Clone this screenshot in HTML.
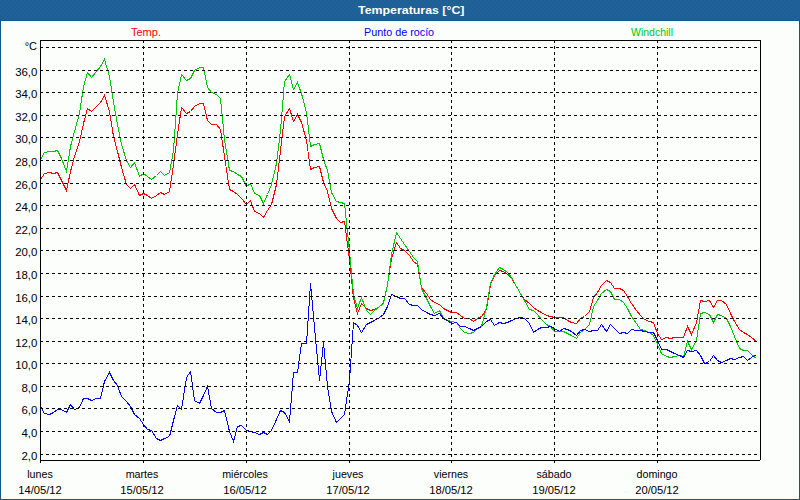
<!DOCTYPE html>
<html><head><meta charset="utf-8"><style>
html,body{margin:0;padding:0;}
body{width:800px;height:500px;position:relative;overflow:hidden;background:#fcfefc;font-family:"Liberation Sans",sans-serif;}
#frame{position:absolute;left:0;top:0;width:798px;height:498px;border:1px solid #13558d;}
#title{position:absolute;left:0;top:0;width:800px;height:20px;background:#1e6094;border-bottom:1px solid #13558d;}
#title span{position:absolute;left:358px;top:4px;transform-origin:left top;transform:scaleX(1.125);color:#fff;font:bold 11px "Liberation Sans",sans-serif;}
.t{position:absolute;font-size:11px;line-height:13px;white-space:nowrap;}
</style></head><body>
<div id="frame"></div>
<div id="title"><svg width="800" height="20" style="position:absolute;left:0;top:0" shape-rendering="crispEdges"><defs><pattern id="dp" width="4" height="4" patternUnits="userSpaceOnUse"><rect x="1" y="1" width="1" height="1" fill="#2864b4"/><rect x="3" y="3" width="1" height="1" fill="#2864b4"/></pattern></defs><rect x="1" y="0" width="798" height="20" fill="url(#dp)"/></svg><span>Temperaturas [°C]</span></div>
<svg width="800" height="500" style="position:absolute;left:0;top:0" shape-rendering="crispEdges"><polyline fill="none" stroke="#ff0000" stroke-width="1" points="40.5,179.5 44.5,173.5 49.5,172.5 53.5,173.5 57.5,172.5 61.5,180.5 66.5,190.5 70.5,171.5 74.5,156.5 79.5,141.5 83.5,123.5 87.5,108.5 91.5,111.5 96.5,106.5 100.5,102.5 104.5,95.5 109.5,111.5 113.5,136.5 117.5,151.5 121.5,167.5 126.5,184.5 130.5,188.5 134.5,184.5 139.5,195.5 143.5,193.5 147.5,195.5 151.5,198.5 156.5,195.5 160.5,192.5 164.5,194.5 169.5,191.5 173.5,164.5 177.5,134.5 181.5,107.5 186.5,113.5 190.5,111.5 194.5,106.5 199.5,103.5 203.5,103.5 207.5,120.5 211.5,124.5 216.5,124.5 220.5,129.5 224.5,156.5 229.5,189.5 233.5,191.5 237.5,194.5 241.5,198.5 246.5,204.5 250.5,200.5 254.5,211.5 259.5,213.5 263.5,217.5 267.5,210.5 271.5,204.5 276.5,184.5 280.5,150.5 284.5,116.5 289.5,108.5 293.5,121.5 297.5,114.5 301.5,122.5 306.5,140.5 310.5,169.5 314.5,167.5 319.5,166.5 323.5,182.5 327.5,191.5 331.5,208.5 336.5,218.5 340.5,222.5 344.5,221.5 349.5,259.5 353.5,298.5 357.5,313.5 361.5,303.5 366.5,308.5 370.5,310.5 374.5,309.5 379.5,306.5 383.5,302.5 387.5,284.5 391.5,258.5 396.5,242.5 400.5,248.5 404.5,250.5 409.5,255.5 413.5,261.5 417.5,264.5 421.5,287.5 426.5,293.5 430.5,299.5 434.5,302.5 439.5,304.5 443.5,308.5 447.5,310.5 451.5,312.5 456.5,312.5 460.5,315.5 464.5,318.5 469.5,318.5 473.5,321.5 477.5,318.5 481.5,316.5 486.5,309.5 490.5,284.5 494.5,275.5 499.5,270.5 503.5,271.5 507.5,274.5 511.5,278.5 516.5,286.5 520.5,293.5 524.5,299.5 529.5,303.5 533.5,307.5 537.5,310.5 541.5,312.5 546.5,315.5 550.5,316.5 554.5,317.5 559.5,317.5 563.5,317.5 567.5,320.5 571.5,322.5 576.5,323.5 580.5,318.5 584.5,316.5 589.5,311.5 593.5,297.5 597.5,292.5 601.5,285.5 606.5,280.5 610.5,282.5 614.5,288.5 619.5,288.5 623.5,290.5 627.5,296.5 631.5,303.5 636.5,310.5 640.5,315.5 644.5,319.5 649.5,321.5 653.5,322.5 657.5,333.5 661.5,339.5 666.5,337.5 670.5,338.5 674.5,337.5 679.5,337.5 683.5,337.5 687.5,326.5 691.5,334.5 696.5,322.5 700.5,300.5 704.5,301.5 709.5,300.5 713.5,307.5 717.5,300.5 721.5,300.5 726.5,304.5 730.5,313.5 734.5,321.5 739.5,329.5 743.5,332.5 747.5,334.5 751.5,337.5 756.5,341.5"/><polyline fill="none" stroke="#00c800" stroke-width="1" points="40.5,159.5 44.5,152.5 49.5,151.5 53.5,151.5 57.5,150.5 61.5,158.5 66.5,171.5 70.5,146.5 74.5,131.5 79.5,113.5 83.5,86.5 87.5,72.5 91.5,77.5 96.5,71.5 100.5,66.5 104.5,59.5 109.5,76.5 113.5,102.5 117.5,124.5 121.5,144.5 126.5,160.5 130.5,167.5 134.5,162.5 139.5,176.5 143.5,173.5 147.5,176.5 151.5,179.5 156.5,175.5 160.5,171.5 164.5,175.5 169.5,172.5 173.5,150.5 177.5,93.5 181.5,74.5 186.5,80.5 190.5,78.5 194.5,70.5 199.5,67.5 203.5,67.5 207.5,87.5 211.5,92.5 216.5,94.5 220.5,98.5 224.5,139.5 229.5,170.5 233.5,171.5 237.5,174.5 241.5,176.5 246.5,186.5 250.5,183.5 254.5,193.5 259.5,195.5 263.5,203.5 267.5,194.5 271.5,184.5 276.5,163.5 280.5,130.5 284.5,81.5 289.5,74.5 293.5,89.5 297.5,82.5 301.5,93.5 306.5,112.5 310.5,146.5 314.5,144.5 319.5,143.5 323.5,159.5 327.5,170.5 331.5,192.5 336.5,201.5 340.5,202.5 344.5,203.5 349.5,251.5 353.5,294.5 357.5,308.5 361.5,297.5 366.5,310.5 370.5,314.5 374.5,310.5 379.5,306.5 383.5,303.5 387.5,284.5 391.5,254.5 396.5,232.5 400.5,238.5 404.5,244.5 409.5,251.5 413.5,257.5 417.5,261.5 421.5,288.5 426.5,298.5 430.5,306.5 434.5,313.5 439.5,310.5 443.5,318.5 447.5,320.5 451.5,321.5 456.5,322.5 460.5,328.5 464.5,332.5 469.5,333.5 473.5,332.5 477.5,328.5 481.5,326.5 486.5,307.5 490.5,283.5 494.5,274.5 499.5,267.5 503.5,269.5 507.5,272.5 511.5,277.5 516.5,286.5 520.5,293.5 524.5,300.5 529.5,309.5 533.5,310.5 537.5,314.5 541.5,319.5 546.5,324.5 550.5,326.5 554.5,331.5 559.5,331.5 563.5,331.5 567.5,333.5 571.5,335.5 576.5,338.5 580.5,332.5 584.5,329.5 589.5,324.5 593.5,306.5 597.5,300.5 601.5,293.5 606.5,289.5 610.5,291.5 614.5,299.5 619.5,299.5 623.5,302.5 627.5,308.5 631.5,316.5 636.5,323.5 640.5,329.5 644.5,330.5 649.5,332.5 653.5,335.5 657.5,344.5 661.5,353.5 666.5,356.5 670.5,357.5 674.5,356.5 679.5,355.5 683.5,356.5 687.5,341.5 691.5,349.5 696.5,340.5 700.5,313.5 704.5,312.5 709.5,314.5 713.5,322.5 717.5,314.5 721.5,315.5 726.5,318.5 730.5,326.5 734.5,336.5 739.5,348.5 743.5,350.5 747.5,350.5 751.5,354.5 756.5,358.5"/><polyline fill="none" stroke="#0000ff" stroke-width="1" points="40.5,406.5 44.5,413.5 49.5,414.5 53.5,412.5 57.5,409.5 61.5,409.5 66.5,412.5 70.5,404.5 74.5,409.5 79.5,407.5 83.5,398.5 87.5,398.5 91.5,400.5 96.5,398.5 100.5,398.5 104.5,381.5 109.5,372.5 113.5,380.5 117.5,385.5 121.5,396.5 126.5,401.5 130.5,406.5 134.5,414.5 139.5,418.5 143.5,424.5 147.5,429.5 151.5,430.5 156.5,438.5 160.5,440.5 164.5,438.5 169.5,436.5 173.5,420.5 177.5,405.5 181.5,409.5 186.5,377.5 190.5,371.5 194.5,400.5 199.5,403.5 203.5,395.5 207.5,386.5 211.5,408.5 216.5,412.5 220.5,412.5 224.5,410.5 229.5,431.5 233.5,441.5 237.5,426.5 241.5,425.5 246.5,430.5 250.5,431.5 254.5,432.5 259.5,434.5 263.5,432.5 267.5,434.5 271.5,430.5 276.5,419.5 280.5,410.5 284.5,412.5 289.5,421.5 293.5,372.5 297.5,372.5 301.5,343.5 306.5,343.5 310.5,283.5 314.5,327.5 319.5,380.5 323.5,342.5 327.5,386.5 331.5,411.5 336.5,422.5 340.5,418.5 344.5,414.5 349.5,380.5 353.5,322.5 357.5,325.5 361.5,332.5 366.5,324.5 370.5,322.5 374.5,320.5 379.5,317.5 383.5,314.5 387.5,306.5 391.5,294.5 396.5,296.5 400.5,298.5 404.5,298.5 409.5,304.5 413.5,305.5 417.5,305.5 421.5,309.5 426.5,312.5 430.5,314.5 434.5,315.5 439.5,313.5 443.5,318.5 447.5,320.5 451.5,323.5 456.5,322.5 460.5,326.5 464.5,326.5 469.5,328.5 473.5,330.5 477.5,328.5 481.5,326.5 486.5,321.5 490.5,319.5 494.5,325.5 499.5,322.5 503.5,323.5 507.5,322.5 511.5,320.5 516.5,318.5 520.5,317.5 524.5,318.5 529.5,323.5 533.5,332.5 537.5,329.5 541.5,327.5 546.5,327.5 550.5,326.5 554.5,328.5 559.5,331.5 563.5,328.5 567.5,329.5 571.5,331.5 576.5,335.5 580.5,330.5 584.5,329.5 589.5,331.5 593.5,330.5 597.5,330.5 601.5,324.5 606.5,331.5 610.5,324.5 614.5,328.5 619.5,333.5 623.5,332.5 627.5,333.5 631.5,329.5 636.5,330.5 640.5,330.5 644.5,331.5 649.5,332.5 653.5,332.5 657.5,340.5 661.5,349.5 666.5,349.5 670.5,351.5 674.5,353.5 679.5,355.5 683.5,357.5 687.5,350.5 691.5,351.5 696.5,350.5 700.5,355.5 704.5,363.5 709.5,361.5 713.5,355.5 717.5,360.5 721.5,362.5 726.5,360.5 730.5,358.5 734.5,359.5 739.5,357.5 743.5,356.5 747.5,360.5 751.5,357.5 756.5,354.5"/><line x1="40" y1="47.5" x2="760" y2="47.5" stroke="#000" stroke-dasharray="3 3"/><line x1="40" y1="70.5" x2="760" y2="70.5" stroke="#000" stroke-dasharray="3 3"/><line x1="40" y1="92.5" x2="760" y2="92.5" stroke="#000" stroke-dasharray="3 3"/><line x1="40" y1="115.5" x2="760" y2="115.5" stroke="#000" stroke-dasharray="3 3"/><line x1="40" y1="137.5" x2="760" y2="137.5" stroke="#000" stroke-dasharray="3 3"/><line x1="40" y1="160.5" x2="760" y2="160.5" stroke="#000" stroke-dasharray="3 3"/><line x1="40" y1="183.5" x2="760" y2="183.5" stroke="#000" stroke-dasharray="3 3"/><line x1="40" y1="205.5" x2="760" y2="205.5" stroke="#000" stroke-dasharray="3 3"/><line x1="40" y1="228.5" x2="760" y2="228.5" stroke="#000" stroke-dasharray="3 3"/><line x1="40" y1="250.5" x2="760" y2="250.5" stroke="#000" stroke-dasharray="3 3"/><line x1="40" y1="273.5" x2="760" y2="273.5" stroke="#000" stroke-dasharray="3 3"/><line x1="40" y1="296.5" x2="760" y2="296.5" stroke="#000" stroke-dasharray="3 3"/><line x1="40" y1="318.5" x2="760" y2="318.5" stroke="#000" stroke-dasharray="3 3"/><line x1="40" y1="341.5" x2="760" y2="341.5" stroke="#000" stroke-dasharray="3 3"/><line x1="40" y1="363.5" x2="760" y2="363.5" stroke="#000" stroke-dasharray="3 3"/><line x1="40" y1="386.5" x2="760" y2="386.5" stroke="#000" stroke-dasharray="3 3"/><line x1="40" y1="408.5" x2="760" y2="408.5" stroke="#000" stroke-dasharray="3 3"/><line x1="40" y1="431.5" x2="760" y2="431.5" stroke="#000" stroke-dasharray="3 3"/><line x1="40" y1="454.5" x2="760" y2="454.5" stroke="#000" stroke-dasharray="3 3"/><line x1="143.5" y1="40" x2="143.5" y2="463" stroke="#000" stroke-dasharray="3 3"/><line x1="246.5" y1="40" x2="246.5" y2="463" stroke="#000" stroke-dasharray="3 3"/><line x1="349.5" y1="40" x2="349.5" y2="463" stroke="#000" stroke-dasharray="3 3"/><line x1="451.5" y1="40" x2="451.5" y2="463" stroke="#000" stroke-dasharray="3 3"/><line x1="554.5" y1="40" x2="554.5" y2="463" stroke="#000" stroke-dasharray="3 3"/><line x1="657.5" y1="40" x2="657.5" y2="463" stroke="#000" stroke-dasharray="3 3"/><line x1="40.5" y1="40" x2="40.5" y2="463" stroke="#000"/><line x1="40" y1="40.5" x2="761" y2="40.5" stroke="#000"/><line x1="760.5" y1="40" x2="760.5" y2="460" stroke="#000"/><line x1="40" y1="460.5" x2="760" y2="460.5" stroke="#000"/></svg>
<div class="t" style="right:763px;top:66px;transform-origin:right top;transform:scaleX(1.04);color:#000;">36,0</div><div class="t" style="right:763px;top:88px;transform-origin:right top;transform:scaleX(1.04);color:#000;">34,0</div><div class="t" style="right:763px;top:111px;transform-origin:right top;transform:scaleX(1.04);color:#000;">32,0</div><div class="t" style="right:763px;top:133px;transform-origin:right top;transform:scaleX(1.04);color:#000;">30,0</div><div class="t" style="right:763px;top:156px;transform-origin:right top;transform:scaleX(1.04);color:#000;">28,0</div><div class="t" style="right:763px;top:179px;transform-origin:right top;transform:scaleX(1.04);color:#000;">26,0</div><div class="t" style="right:763px;top:201px;transform-origin:right top;transform:scaleX(1.04);color:#000;">24,0</div><div class="t" style="right:763px;top:224px;transform-origin:right top;transform:scaleX(1.04);color:#000;">22,0</div><div class="t" style="right:763px;top:246px;transform-origin:right top;transform:scaleX(1.04);color:#000;">20,0</div><div class="t" style="right:763px;top:269px;transform-origin:right top;transform:scaleX(1.04);color:#000;">18,0</div><div class="t" style="right:763px;top:292px;transform-origin:right top;transform:scaleX(1.04);color:#000;">16,0</div><div class="t" style="right:763px;top:314px;transform-origin:right top;transform:scaleX(1.04);color:#000;">14,0</div><div class="t" style="right:763px;top:337px;transform-origin:right top;transform:scaleX(1.04);color:#000;">12,0</div><div class="t" style="right:763px;top:359px;transform-origin:right top;transform:scaleX(1.04);color:#000;">10,0</div><div class="t" style="right:763px;top:382px;transform-origin:right top;transform:scaleX(1.04);color:#000;">8,0</div><div class="t" style="right:763px;top:404px;transform-origin:right top;transform:scaleX(1.04);color:#000;">6,0</div><div class="t" style="right:763px;top:427px;transform-origin:right top;transform:scaleX(1.04);color:#000;">4,0</div><div class="t" style="right:763px;top:450px;transform-origin:right top;transform:scaleX(1.04);color:#000;">2,0</div><div class="t" style="right:763px;top:40px;transform-origin:right top;color:#000;">°C</div><div class="t" style="left:-60.5px;width:200px;text-align:center;top:468px;transform-origin:center top;transform:scaleX(0.97);color:#000;">lunes</div><div class="t" style="left:-60.5px;width:200px;text-align:center;top:484px;transform-origin:center top;transform:scaleX(1.02);color:#000;">14/05/12</div><div class="t" style="left:42.35714285714286px;width:200px;text-align:center;top:468px;transform-origin:center top;transform:scaleX(0.97);color:#000;">martes</div><div class="t" style="left:42.35714285714286px;width:200px;text-align:center;top:484px;transform-origin:center top;transform:scaleX(1.02);color:#000;">15/05/12</div><div class="t" style="left:145.21428571428572px;width:200px;text-align:center;top:468px;transform-origin:center top;transform:scaleX(0.97);color:#000;">miércoles</div><div class="t" style="left:145.21428571428572px;width:200px;text-align:center;top:484px;transform-origin:center top;transform:scaleX(1.02);color:#000;">16/05/12</div><div class="t" style="left:248.07142857142856px;width:200px;text-align:center;top:468px;transform-origin:center top;transform:scaleX(0.97);color:#000;">jueves</div><div class="t" style="left:248.07142857142856px;width:200px;text-align:center;top:484px;transform-origin:center top;transform:scaleX(1.02);color:#000;">17/05/12</div><div class="t" style="left:350.92857142857144px;width:200px;text-align:center;top:468px;transform-origin:center top;transform:scaleX(0.97);color:#000;">viernes</div><div class="t" style="left:350.92857142857144px;width:200px;text-align:center;top:484px;transform-origin:center top;transform:scaleX(1.02);color:#000;">18/05/12</div><div class="t" style="left:453.78571428571433px;width:200px;text-align:center;top:468px;transform-origin:center top;transform:scaleX(0.97);color:#000;">sábado</div><div class="t" style="left:453.78571428571433px;width:200px;text-align:center;top:484px;transform-origin:center top;transform:scaleX(1.02);color:#000;">19/05/12</div><div class="t" style="left:556.6428571428571px;width:200px;text-align:center;top:468px;transform-origin:center top;transform:scaleX(0.97);color:#000;">domingo</div><div class="t" style="left:556.6428571428571px;width:200px;text-align:center;top:484px;transform-origin:center top;transform:scaleX(1.02);color:#000;">20/05/12</div><div class="t" style="left:131px;top:26px;transform-origin:left top;color:#ff0000;">Temp.</div><div class="t" style="left:364px;top:26px;transform-origin:left top;transform:scaleX(0.98);color:#0000ff;">Punto de rocío</div><div class="t" style="left:631px;top:26px;transform-origin:left top;transform:scaleX(0.955);color:#00c800;">Windchill</div>
</body></html>
